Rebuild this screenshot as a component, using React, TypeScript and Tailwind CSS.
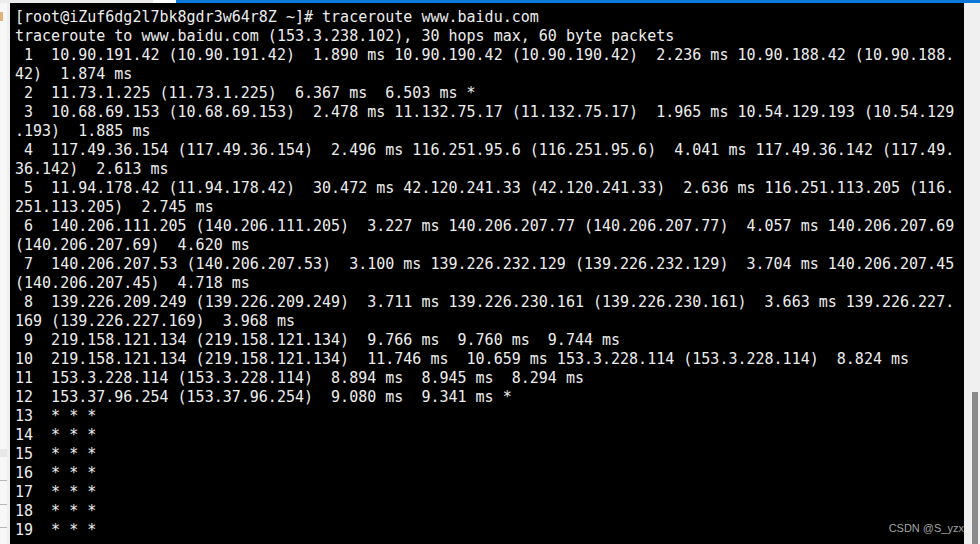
const lines: string[] = [
  "[root@iZuf6dg2l7bk8gdr3w64r8Z ~]# traceroute www.baidu.com",
  "traceroute to www.baidu.com (153.3.238.102), 30 hops max, 60 byte packets",
  " 1  10.90.191.42 (10.90.191.42)  1.890 ms 10.90.190.42 (10.90.190.42)  2.236 ms 10.90.188.42 (10.90.188.",
  "42)  1.874 ms",
  " 2  11.73.1.225 (11.73.1.225)  6.367 ms  6.503 ms *",
  " 3  10.68.69.153 (10.68.69.153)  2.478 ms 11.132.75.17 (11.132.75.17)  1.965 ms 10.54.129.193 (10.54.129",
  ".193)  1.885 ms",
  " 4  117.49.36.154 (117.49.36.154)  2.496 ms 116.251.95.6 (116.251.95.6)  4.041 ms 117.49.36.142 (117.49.",
  "36.142)  2.613 ms",
  " 5  11.94.178.42 (11.94.178.42)  30.472 ms 42.120.241.33 (42.120.241.33)  2.636 ms 116.251.113.205 (116.",
  "251.113.205)  2.745 ms",
  " 6  140.206.111.205 (140.206.111.205)  3.227 ms 140.206.207.77 (140.206.207.77)  4.057 ms 140.206.207.69",
  "(140.206.207.69)  4.620 ms",
  " 7  140.206.207.53 (140.206.207.53)  3.100 ms 139.226.232.129 (139.226.232.129)  3.704 ms 140.206.207.45",
  "(140.206.207.45)  4.718 ms",
  " 8  139.226.209.249 (139.226.209.249)  3.711 ms 139.226.230.161 (139.226.230.161)  3.663 ms 139.226.227.",
  "169 (139.226.227.169)  3.968 ms",
  " 9  219.158.121.134 (219.158.121.134)  9.766 ms  9.760 ms  9.744 ms",
  "10  219.158.121.134 (219.158.121.134)  11.746 ms  10.659 ms 153.3.228.114 (153.3.228.114)  8.824 ms",
  "11  153.3.228.114 (153.3.228.114)  8.894 ms  8.945 ms  8.294 ms",
  "12  153.37.96.254 (153.37.96.254)  9.080 ms  9.341 ms *",
  "13  * * *",
  "14  * * *",
  "15  * * *",
  "16  * * *",
  "17  * * *",
  "18  * * *",
  "19  * * *",
];

export default function App() {
  return (
    <div className="w-[980px] h-[544px] flex flex-col overflow-hidden bg-black">
      {/* window tab strip */}
      <div className="h-[3px] flex shrink-0">
        <div className="w-[153px] bg-[#ececec]" />
        <div className="w-[23px] bg-white" />
        <div className="flex-1 bg-[#0a78d7]" />
      </div>

      <div className="flex-1 flex min-h-0">
        {/* side panel edge */}
        <div className="w-[10px] shrink-0 flex flex-col bg-[#f7f7f7] border-r-[3px] border-[#efefef]">
          <div className="h-[9px] w-[3px] mt-[9px] bg-[#e2b27a]" />
          <div className="h-[428px]" />
          <div className="h-[8px] bg-[#e8e8e8]" />
          <div className="h-[24px] border-b border-[#b8b8b8]" />
          <div className="h-[24px] border-b border-[#b8b8b8]" />
          <div className="h-[23px] border-b border-[#b8b8b8]" />
        </div>

        {/* terminal */}
        <div className="flex-1 relative bg-black pl-[5px] pt-[5px] overflow-hidden text-[15px] leading-[19px] text-[#ededed] [font-family:'DejaVu_Sans_Mono','Liberation_Mono',monospace]">
          {lines.map((l, i) => (
            <div key={i} className="w-fit h-[19px] whitespace-pre">
              {l}
            </div>
          ))}
          <span className="absolute right-[0px] bottom-[10px] text-[11px] leading-none text-[#a3a3a3] [font-family:'Liberation_Sans',Arial,sans-serif]">
            CSDN @S_yzx
          </span>
        </div>

        {/* scrollbar */}
        <div className="w-[16px] shrink-0 bg-[#f0f0f0] flex flex-col justify-end pl-[8px]">
          <div className="w-[6px] h-[152px] bg-[#8a8a8a]" />
        </div>
      </div>
    </div>
  );
}
